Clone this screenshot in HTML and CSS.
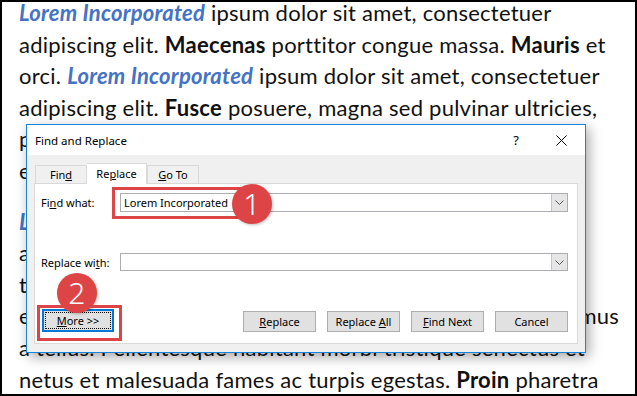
FILE: index.html
```html
<!DOCTYPE html>
<html lang="en">
<head>
    <meta charset="UTF-8">
    <title>Find and Replace</title>
    <link rel="stylesheet" href="styles.css">
</head>
<body>
<div class="page">
    <p class="para">
        <span class="line"><b class="co">Lorem Incorporated</b> ipsum dolor sit amet, consectetuer</span>
        <span class="line">adipiscing elit. <b>Maecenas</b> porttitor congue massa. <b>Mauris</b> et</span>
        <span class="line">orci. <b class="co">Lorem Incorporated</b> ipsum dolor sit amet, consectetuer</span>
        <span class="line">adipiscing elit. <b>Fusce</b> posuere, magna sed pulvinar ultricies,</span>
        <span class="line">purus lectus malesuada libero, sit amet commodo magna</span>
        <span class="line">eros quis urna.</span>
    </p>
    <p class="para">
        <span class="line"><b class="co">Lorem Incorporated</b> nunc viverra imperdiet enim.</span>
        <span class="line">aliquam erat volutpat. Fusce est sit amet orci et</span>
        <span class="line">tellus lorem interdum. Nunc posuere, magna sed pulvinar</span>
        <span class="line">elementum. Nunc viverra imperdiet enim. Fusce est. Vivamus</span>
        <span class="line">a tellus. Pellentesque habitant morbi tristique senectus et</span>
        <span class="line">netus et malesuada fames ac turpis egestas. <b>Proin</b> pharetra</span>
    </p>

    <!-- dialog sits over the document -->
    <div class="dlg">
        <div class="dlg-title">
            <span>Find and Replace</span>
            <span class="help">?</span>
            <svg class="close" width="11" height="11" viewBox="0 0 11 11"><path d="M0.5 0.5L10.5 10.5M10.5 0.5L0.5 10.5" stroke="#000" stroke-width="1"/></svg>
        </div>
        <div class="dlg-body">
            <div class="tabs">
                <div class="tab">Fin<u>d</u></div>
                <div class="tab tab-on">Re<u>p</u>lace</div>
                <div class="tab"><u>G</u>o To</div>
            </div>
            <div class="panel">
                <div class="row">
                    <label>Fi<u>n</u>d what:</label>
                    <div class="combo">
                        <span class="val">Lorem Incorporated</span>
                        <span class="drop"><svg width="9" height="5" viewBox="0 0 9 5"><path d="M0.5 0.5L4.5 4.5L8.5 0.5" fill="none" stroke="#555"/></svg></span>
                    </div>
                </div>
                <div class="row row2">
                    <label>Replace wi<u>t</u>h:</label>
                    <div class="combo">
                        <span class="val"></span>
                        <span class="drop"><svg width="9" height="5" viewBox="0 0 9 5"><path d="M0.5 0.5L4.5 4.5L8.5 0.5" fill="none" stroke="#555"/></svg></span>
                    </div>
                </div>
                <div class="btns">
                    <button class="btn btn-focus"><u>M</u>ore &gt;&gt;</button>
                    <button class="btn btn-first"><u>R</u>eplace</button>
                    <button class="btn">Replace <u>A</u>ll</button>
                    <button class="btn"><u>F</u>ind Next</button>
                    <button class="btn">Cancel</button>
                </div>
            </div>
        </div>
    </div>

    <!-- callouts -->
    <div class="mark mark1"></div>
    <div class="badge badge1">1</div>
    <div class="badge badge2">2</div>
    <div class="mark mark2"></div>
</div>
</body>
</html>
```

FILE: styles.css
```css
body{
    margin: 0;
}
.page{
    position: relative;
    width: 637px;
    height: 396px;
    box-sizing: border-box;
    border: 2px solid #000;
    overflow: hidden;
    background: #fff;
    padding-left: 17px;
    font-family: Lato, "Open Sans", sans-serif;
    font-size: 22px;
    letter-spacing: 0.25px;
    color: #111;
}
.para{
    margin: -5px 0 19px;
    line-height: 31.6px;
}
.para + .para{
    margin-top: 0;
}
.line{
    display: block;
    white-space: nowrap;
}
.co{
    color: #4472c4;
    font-style: italic;
}

/* dialog */
.dlg{
    position: absolute;
    left: 24px;
    top: 122px;
    width: 560px;
    height: 229px;
    box-sizing: border-box;
    border: 1px solid #1883d7;
    background: #f0f0f0;
    box-shadow: 3px 4px 12px rgba(0,0,0,0.35);
    font-family: "Noto Sans", "Open Sans", sans-serif;
    font-size: 11px;
    letter-spacing: 0;
    color: #000;
}
.dlg-title{
    height: 30px;
    background: #fff;
    display: flex;
    align-items: center;
    padding-left: 8px;
    font-size: 11.5px;
}
.help{
    margin-left: auto;
    font-size: 13px;
    margin-right: 37px;
}
.close{
    margin-right: 18px;
}
.dlg-body{
    padding: 8px 7px 0;
}
.tabs{
    display: flex;
    align-items: flex-end;
    height: 20px;
    margin-left: 1px;
    position: relative;
    z-index: 1;
}
.tab{
    height: 17px;
    line-height: 17px;
    border: 1px solid #d9d9d9;
    border-bottom: none;
    background: #f0f0f0;
    text-align: center;
    width: 50px;
}
.tab + .tab{
    border-left: none;
}
.tab-on{
    height: 20px;
    line-height: 20px;
    width: 59px;
    background: #fff;
    position: relative;
    top: 1px;
}
.tab-on + .tab{
    border-left: 1px solid #d9d9d9;
}
.panel{
    height: 161px;
    box-sizing: border-box;
    border: 1px solid #d9d9d9;
    background: #fff;
    padding: 9px 9px 0 6px;
}
.row{
    display: grid;
    grid-template-columns: 79px 1fr;
    align-items: center;
    height: 19px;
}
.row2{
    margin-top: 41px;
    height: 18px;
}
.combo{
    height: 100%;
    box-sizing: border-box;
    border: 1px solid #abadb3;
    display: flex;
    align-items: center;
}
.val{
    flex: 1;
    padding-left: 3px;
}
.drop{
    width: 16px;
    height: 100%;
    box-sizing: border-box;
    border-left: 1px solid #c4c4c4;
    background: #e6e6e6;
    display: flex;
    align-items: center;
    justify-content: center;
}
.btns{
    display: flex;
    gap: 11px;
    margin-top: 40px;
}
.btn{
    width: 73px;
    height: 21px;
    box-sizing: border-box;
    border: 1px solid #adadad;
    background: #e1e1e1;
    font-family: "Noto Sans", "Open Sans", sans-serif;
    font-size: 11px;
    color: #000;
    padding: 0;
    position: relative;
}
.btn-focus{
    width: 72px;
    height: 23px;
    margin-top: -2px;
    margin-left: 1px;
    border: 2px solid #0078d7;
}
.btn-focus::after{
    content: "";
    position: absolute;
    inset: 1px;
    border: 1px dotted #000;
}
.btn-first{
    margin-left: auto;
}

/* callouts */
.mark{
    position: absolute;
    border: 3px solid #dc4446;
    box-sizing: border-box;
}
.mark1{
    left: 110px;
    top: 185px;
    width: 140px;
    height: 32px;
}
.mark2{
    left: 35px;
    top: 303px;
    width: 85px;
    height: 36px;
}
.badge{
    position: absolute;
    width: 40px;
    height: 40px;
    border-radius: 50%;
    background: #dc4446;
    color: #fff;
    font-family: "Noto Sans", sans-serif;
    font-size: 30px;
    font-weight: 300;
    line-height: 40px;
    text-align: center;
    box-shadow: 1px 1px 3px rgba(0,0,0,0.25);
}
.badge1{
    left: 230px;
    top: 182px;
}
.badge2{
    left: 55px;
    top: 271px;
}
```
